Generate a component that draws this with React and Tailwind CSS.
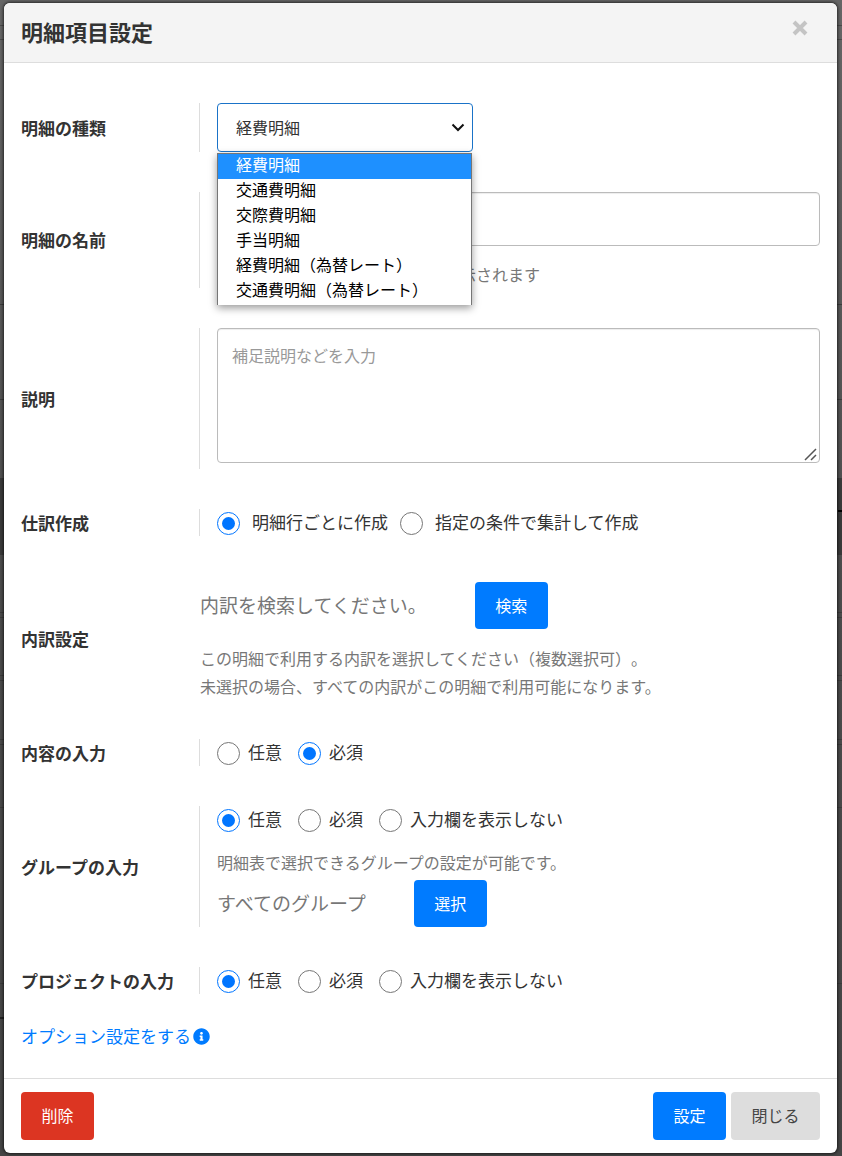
import React, { useState } from 'react';
import { FaInfoCircle } from 'react-icons/fa';

const detailTypes = [
  '経費明細',
  '交通費明細',
  '交際費明細',
  '手当明細',
  '経費明細（為替レート）',
  '交通費明細（為替レート）',
];

const inputOptions = ['任意', '必須', '入力欄を表示しない'];

const Button = ({ className, children }) => (
  <button
    type="button"
    className={`min-w-[73px] px-5 pb-0.5 rounded text-base whitespace-nowrap cursor-pointer ${className}`}
  >
    {children}
  </button>
);

const Row = ({ label, htmlFor, children }) => (
  <div className="flex items-stretch">
    <div className="w-[178px] shrink-0 flex items-center">
      {htmlFor ? (
        <label htmlFor={htmlFor} className="text-[17px] leading-6 font-bold">{label}</label>
      ) : (
        <span className="text-[17px] leading-6 font-bold">{label}</span>
      )}
    </div>
    <div className="flex-1 min-w-0 border-l border-[#ddd] pl-[17px]">{children}</div>
  </div>
);

const RadioGroup = ({ name, label, options, defaultValue, wide }) => (
  <div role="radiogroup" aria-label={label} className={`flex h-[27px] pt-0.5 items-center ${wide ? 'gap-3' : 'gap-4'}`}>
    {options.map((option) => (
      <label key={option} className={`flex items-center ${wide ? 'gap-3' : 'gap-2'}`}>
        <input
          type="radio"
          name={name}
          value={option}
          defaultChecked={option === defaultValue}
          className="appearance-none size-[23px] shrink-0 grid place-content-center rounded-full border border-[#767676] bg-white checked:border-[#0075ff] before:size-[13px] before:rounded-full checked:before:bg-[#0075ff]"
        />
        <span className="pb-1 text-[17px] leading-6">{option}</span>
      </label>
    ))}
  </div>
);

const TypeSelect = () => {
  const [value, setValue] = useState(detailTypes[0]);

  return (
    <div className="relative w-64">
      <select
        id="detail-type"
        value={value}
        onChange={(e) => setValue(e.target.value)}
        className="block w-full h-[49px] appearance-none rounded-sm border border-[#1a73c8] bg-white pl-[18px] pr-8 pb-0.5 text-base text-[#333] outline-none"
      >
        {detailTypes.map((type) => (
          <option key={type}>{type}</option>
        ))}
      </select>
      <svg viewBox="0 0 14 9" className="absolute right-2 top-5 w-[14px] h-[9px] pointer-events-none" fill="none" stroke="#111" strokeWidth="2">
        <path d="M1.500 1.500 7 7l5.500-5.500" />
      </svg>
      <ul
        role="listbox"
        aria-label="明細の種類"
        className="absolute left-0 top-full z-10 mt-px w-[255px] border border-b-0 border-[#767676] bg-white pb-px text-base text-black shadow-[0_3px_8px_rgba(0,0,0,0.4)]"
      >
        {detailTypes.map((type) => (
          <li
            key={type}
            role="option"
            aria-selected={type === value}
            onClick={() => setValue(type)}
            className="h-[25px] pl-[18px] leading-5 whitespace-nowrap aria-selected:bg-[#1e90ff] aria-selected:text-white"
          >
            {type}
          </li>
        ))}
      </ul>
    </div>
  );
};

// dimmed page behind the dialog
const Backdrop = () => (
  <div aria-hidden="true" className="absolute inset-0 overflow-hidden bg-linear-to-b from-[#666] via-[#4c4c4c] to-[#454545]">
    <div className="absolute inset-x-0 top-[25px] h-[15px] border-y border-[#4a4a4a]" />
    <div className="absolute inset-x-0 top-[304px] h-24 border-y border-[#3c3c3c]" />
    <div className="absolute inset-x-0 top-[478px] h-[77px] bg-[#3a3a3a]" />
    <div className="absolute inset-x-0 top-[612px] h-1.5 border-y border-[#3c3c3c]" />
    <div className="absolute inset-x-0 top-[675px] h-1.5 border-y border-[#3c3c3c]" />
    <div className="absolute inset-x-0 top-[739px] h-1.5 border-y border-[#3c3c3c]" />
    <div className="absolute inset-x-0 top-[807px] h-px bg-[#3c3c3c]" />
    <div className="absolute inset-x-0 top-[983px] h-px bg-[#3c3c3c]" />
    <div className="absolute left-0 top-[1017px] w-1 h-0.5 bg-[#222]" />
    <div className="absolute right-0 top-[510px] w-1 h-0.5 bg-black" />
  </div>
);

const App = () => (
  <div
    className="relative min-h-screen pl-1 pr-[5px] py-[3px] text-[#333]"
    style={{ fontFamily: '"Noto Sans CJK JP", sans-serif' }}
  >
    <Backdrop />
    <div role="dialog" aria-labelledby="dialog-title" className="relative rounded-md bg-white shadow-[0_0_3px_1px_rgba(0,0,0,0.6)] overflow-hidden">
      <header className="flex items-start justify-between h-[60px] bg-[#f4f4f4] border-b border-[#ddd] px-[17px]">
        <h1 id="dialog-title" className="text-[22px] leading-[56px] font-bold">明細項目設定</h1>
        <button type="button" aria-label="閉じる" className="mt-[17px] mr-3 cursor-pointer">
          <svg viewBox="0 0 16 16" className="size-4" stroke="#c4c4c4" strokeWidth="4">
            <path d="M2 2 14 14M14 2 2 14" />
          </svg>
        </button>
      </header>

      <div className="flex flex-col gap-10 px-[17px] pt-10 pb-7">
        <Row label="明細の種類" htmlFor="detail-type">
          <TypeSelect />
        </Row>

        <Row label="明細の名前" htmlFor="detail-name">
          <input
            id="detail-name"
            type="text"
            className="block w-full h-[54px] rounded-sm border border-[#bbb] px-[14px] text-base shadow-[inset_0_1px_1px_rgba(0,0,0,0.075)]"
          />
          <p className="mt-[14px] pl-[243px] text-base leading-7 text-[#777]">示されます</p>
        </Row>

        <Row label="説明" htmlFor="detail-note">
          <div className="relative pb-1.5">
            <textarea
              id="detail-note"
              placeholder="補足説明などを入力"
              className="block w-full h-[135px] resize-none rounded-sm border border-[#bbb] px-[14px] py-[13px] text-base leading-[26px] placeholder:text-[#999] shadow-[inset_0_1px_1px_rgba(0,0,0,0.075)]"
            />
            <svg viewBox="0 0 13 13" className="absolute right-[3px] bottom-2 size-[13px] pointer-events-none" stroke="#555" strokeWidth="1.5">
              <path d="M1 12 12 1M7 12l5-5" />
            </svg>
          </div>
        </Row>

        <Row label="仕訳作成">
          <RadioGroup
            name="journal"
            label="仕訳作成"
            options={['明細行ごとに作成', '指定の条件で集計して作成']}
            defaultValue="明細行ごとに作成"
            wide
          />
        </Row>

        <div className="flex -mb-0.5">
          <div className="w-[179px] shrink-0 flex items-center">
            <span className="text-[17px] leading-6 font-bold">内訳設定</span>
          </div>
          <div className="flex-1 min-w-0 pt-1.5 pb-px text-[#777]">
            <div className="flex items-center gap-12">
              <span className="text-[19px]">内訳を検索してください。</span>
              <Button className="h-[47px] bg-[#007bff] text-white">検索</Button>
            </div>
            <p className="mt-[15px] text-base leading-7 [text-spacing-trim:space-all]">
              この明細で利用する内訳を選択してください（複数選択可）。
              <br />
              未選択の場合、すべての内訳がこの明細で利用可能になります。
            </p>
          </div>
        </div>

        <Row label="内容の入力">
          <RadioGroup name="content" label="内容の入力" options={inputOptions.slice(0, 2)} defaultValue="必須" />
        </Row>

        <Row label="グループの入力">
          <RadioGroup name="group" label="グループの入力" options={inputOptions} defaultValue="任意" />
          <p className="mt-[15px] mb-1 text-base leading-7 text-[#777]">明細表で選択できるグループの設定が可能です。</p>
          <div className="flex items-center gap-12">
            <span className="text-[19px] text-[#777]">すべてのグループ</span>
            <Button className="h-[47px] bg-[#007bff] text-white">選択</Button>
          </div>
        </Row>

        <Row label="プロジェクトの入力">
          <RadioGroup name="project" label="プロジェクトの入力" options={inputOptions} defaultValue="任意" />
        </Row>

        <a href="#options" className="-mt-3 flex items-center gap-0.5 self-start text-[17px] leading-7 text-[#007bff]">
          オプション設定をする
          <FaInfoCircle className="size-[17px]" />
        </a>
      </div>

      <footer className="flex items-center gap-[5px] border-t border-[#ddd] px-[17px] py-[13px]">
        <Button className="h-12 mr-auto bg-[#dc3522] text-white">削除</Button>
        <Button className="h-12 bg-[#007bff] text-white">設定</Button>
        <Button className="h-12 min-w-[89px] bg-[#ddd] text-[#444]">閉じる</Button>
      </footer>
    </div>
  </div>
);

export default App;
